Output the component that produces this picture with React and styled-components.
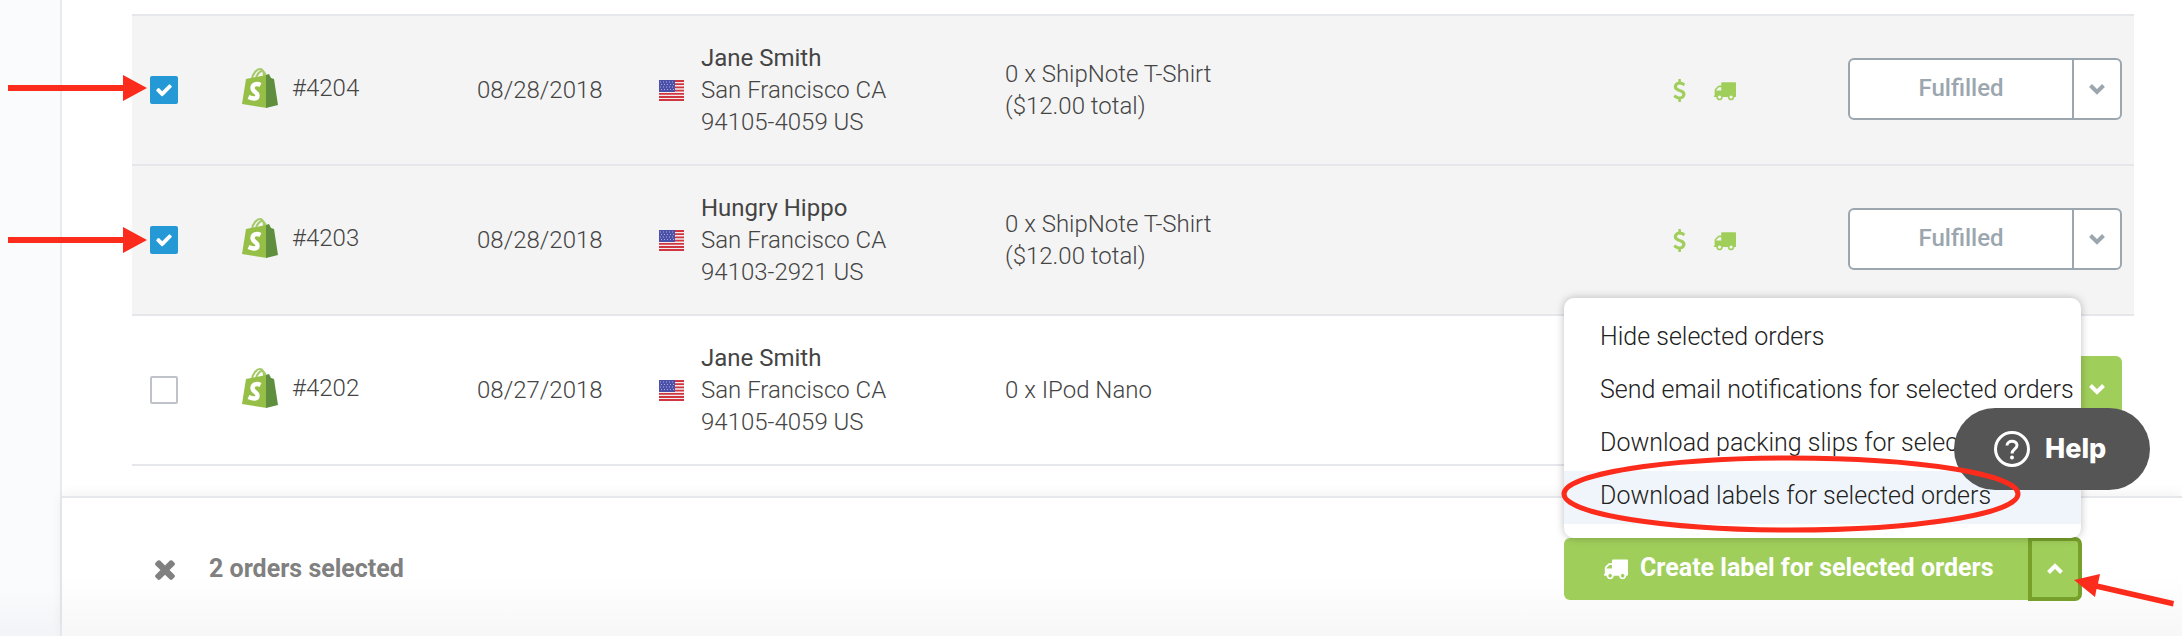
import React from "react";
import styled, { createGlobalStyle } from "styled-components";

const truckPath =
  "M640 1408q0-52-38-90t-90-38-90 38-38 90 38 90 90 38 90-38 38-90zm-384-512h384v-256h-158q-13 0-22 9l-195 195q-9 9-9 22v30zm1280 512q0-52-38-90t-90-38-90 38-38 90 38 90 90 38 90-38 38-90zm256-1088v1024q0 15-4 26.5t-13.5 18.5-16.5 11.5-23.5 6-22.5 2-25.5 0-22.5-.5q0 106-75 181t-181 75-181-75-75-181h-384q0 106-75 181t-181 75-181-75-75-181h-64q-3 0-22.5.5t-25.5 0-22.5-2-23.5-6-16.5-11.5-13.5-18.5-4-26.5q0-26 19-45t45-19v-320q0-8-.5-35t0-38 2.5-34.5 6.5-37 14-30.5 22.5-30l198-198q19-19 50.5-32t58.5-13h160v-192q0-26 19-45t45-19h1024q26 0 45 19t19 45z";
const dollarPath =
  "M1362 1185q0 153-99.5 263.5t-258.5 136.5v175q0 14-9 23t-23 9h-135q-13 0-22.5-9.5t-9.5-22.5v-175q-66-9-127.5-31t-101.5-44.5-74-48-46.5-37.5-17.5-18q-17-21-2-41l103-135q7-10 23-12 15-2 24 9l2 2q113 99 243 125 37 8 74 8 81 0 142.5-43t61.5-122q0-28-15-53t-33.5-42-58.5-37.5-66-32-80-32.5q-39-16-61.5-25t-61.5-26.5-62.5-31-56.5-35.5-53.5-42.5-43.5-49-35.5-58-21-66.5-8.5-78q0-138 98-242t255-134v-180q0-13 9.5-22.5t22.5-9.5h135q14 0 23 9t9 23v176q57 6 110.5 23t87 33.5 63.5 37.5 39 29 15 14q17 18 5 38l-81 146q-8 15-23 16-14 3-27-7-3-3-14.5-12t-39-26.5-58.5-32-74.5-26-85.5-11.5q-95 0-155 43t-60 111q0 26 8.5 48t29.5 41.5 39.5 33 56 31 60.5 27 70 27.5q53 20 81 31.5t76 35 75.5 42.5 62 50 53 63.5 31.5 76.5 13 94z";
const closePath =
  "M1490 1322q0 40-28 68l-136 136q-28 28-68 28t-68-28l-294-294-294 294q-28 28-68 28t-68-28l-136-136q-28-28-28-68t28-68l294-294-294-294q-28-28-28-68t28-68l136-136q28-28 68-28t68 28l294 294 294-294q28-28 68-28t68 28l136 136q28 28 28 68t-28 68l-294 294 294 294q28 28 28 68z";
const checkPath =
  "M1671 566q0 40-28 68l-724 724-136 136q-28 28-68 28t-68-28l-136-136-362-362q-28-28-28-68t28-68l136-136q28-28 68-28t68 28l294 295 656-657q28-28 68-28t68 28l136 136q28 28 28 68z";

const Glyph = ({ d, size }) => (
  <svg
    width={size}
    height={size}
    viewBox="0 0 1792 1792"
    fill="currentColor"
    aria-hidden="true"
  >
    <path d={d} />
  </svg>
);

const Chevron = ({ up }) => (
  <svg width="18" height="12" viewBox="0 0 18 12" aria-hidden="true">
    <path
      d={up ? "M2.5 9.5 9 3l6.5 6.5" : "M2.5 2.5 9 9l6.5-6.5"}
      fill="none"
      stroke="currentColor"
      strokeWidth="4"
    />
  </svg>
);

const ShopifyBag = () => (
  <svg width="36" height="40" viewBox="0 0 36 40" aria-hidden="true">
    <path
      d="M10 11C11 5 15 1 18 1c3 0 4 4 4 8M14 10c1-4 4-7 6-7 2 0 3 2 4 5"
      fill="none"
      stroke="#a3c968"
      strokeWidth="2"
    />
    <path d="M4 11 24 7l1 33L0 36z" fill="#95bf47" />
    <path d="M24 7l3-1 2 4 3 1 4 26-12 3z" fill="#5e8e3e" />
    <path
      d="M18.500 17c-4-2-8-.6-8 3 0 4 5 4 5 7.400 0 4-4.500 3.600-9 1.500"
      fill="none"
      stroke="#fff"
      strokeWidth="4.400"
    />
  </svg>
);

const Flag = () => (
  <svg width="25" height="21" viewBox="0 0 25 21" aria-label="US" role="img">
    <path d="M0 0h25v21H0z" fill="#f3ecec" />
    <path
      d="M0 1h25M0 4.200h25M0 7.400h25M0 10.600h25M0 13.800h25M0 17h25M0 20h25"
      stroke="#cf3640"
      strokeWidth="1.800"
    />
    <path d="M0 0h16v12H0z" fill="#4b50a8" />
    <path
      d="M1 2h14M2 4.500h14M1 7h14M2 9.500h14"
      stroke="#a9abdd"
      strokeWidth="1"
      strokeDasharray="1 2"
    />
  </svg>
);

const orders = [
  {
    id: "4204",
    date: "08/28/2018",
    name: "Jane Smith",
    zip: "94105-4059 US",
    item: "0 x ShipNote T-Shirt",
    total: "($12.00 total)",
    fulfilled: true,
  },
  {
    id: "4203",
    date: "08/28/2018",
    name: "Hungry Hippo",
    zip: "94103-2921 US",
    item: "0 x ShipNote T-Shirt",
    total: "($12.00 total)",
    fulfilled: true,
  },
  {
    id: "4202",
    date: "08/27/2018",
    name: "Jane Smith",
    zip: "94105-4059 US",
    item: "0 x IPod Nano",
    fulfilled: false,
  },
];

const actions = [
  "Hide selected orders",
  "Send email notifications for selected orders",
  "Download packing slips for selected orders",
  "Download labels for selected orders",
];

function OrderRow({ order }) {
  return (
    <Row $selected={order.fulfilled}>
      <td>
        <Check>
          <input
            type="checkbox"
            aria-label={`Select order #${order.id}`}
            defaultChecked={order.fulfilled}
          />
          <Glyph d={checkPath} size={18} />
        </Check>
      </td>
      <td>
        <OrderNumber>
          <ShopifyBag />
          <span>#{order.id}</span>
        </OrderNumber>
      </td>
      <td>{order.date}</td>
      <td>
        <Customer>
          <Flag />
          <address>
            <strong>{order.name}</strong>
            <br />
            San Francisco CA
            <br />
            {order.zip}
          </address>
        </Customer>
      </td>
      <td>
        {order.item}
        {order.total && <br />}
        {order.total}
      </td>
      <td>
        {order.fulfilled && (
          <Status>
            <Glyph d={dollarPath} size={23} />
            <Glyph d={truckPath} size={23} />
          </Status>
        )}
      </td>
      <td>
        <Split $primary={!order.fulfilled}>
          <button type="button">{order.fulfilled && "Fulfilled"}</button>
          <button type="button" aria-label="More actions">
            <Chevron />
          </button>
        </Split>
      </td>
    </Row>
  );
}

export default function App() {
  return (
    <>
      <GlobalStyle />
      <Page>
        <Sidebar />
        <Main>
          <Orders>
            <colgroup>
              <col width="110" />
              <col width="235" />
              <col width="182" />
              <col width="346" />
              <col />
              <col width="180" />
              <col width="286" />
            </colgroup>
            <tbody>
              {orders.map((order) => (
                <OrderRow key={order.id} order={order} />
              ))}
            </tbody>
          </Orders>
          <Footer>
            <Clear type="button" aria-label="Clear selection">
              <Glyph d={closePath} size={30} />
            </Clear>
            <Count>2 orders selected</Count>
            <BulkActions>
              <Menu>
                {actions.map((label, i) => (
                  <MenuItem key={label} type="button" $active={i === 3}>
                    {label}
                  </MenuItem>
                ))}
              </Menu>
              <CreateLabel type="button">
                <Glyph d={truckPath} size={25} />
                Create label for selected orders
              </CreateLabel>
              <Toggle type="button" aria-label="Close menu">
                <Chevron up />
              </Toggle>
            </BulkActions>
          </Footer>
        </Main>
        <Help type="button">
          <svg width="36" height="36" viewBox="0 0 36 36" aria-hidden="true">
            <circle
              cx="18"
              cy="18"
              r="16.500"
              fill="none"
              stroke="#fff"
              strokeWidth="3"
            />
            <path
              d="M13 14.500c0-5.500 10-5.500 10-.3 0 4-5 3.800-5 8.300"
              fill="none"
              stroke="#fff"
              strokeWidth="3"
            />
            <circle cx="18" cy="26.500" r="2" fill="#fff" />
          </svg>
          Help
        </Help>
        <Arrow $x={8} $y={74} width="140" height="28" viewBox="0 0 140 28">
          <path d="M0 11h115V1l24 13-24 13V17H0z" />
        </Arrow>
        <Arrow $x={8} $y={226} width="140" height="28" viewBox="0 0 140 28">
          <path d="M0 11h115V1l24 13-24 13V17H0z" />
        </Arrow>
        <Arrow $x={2072} $y={572} width="104" height="36" viewBox="0 0 104 36">
          <path d="M2 8 28 2l-2 9.500L102 29l-1 5.500L24.500 17 23 25z" />
        </Arrow>
        <Arrow $x={1560} $y={454} width="464" height="80" viewBox="0 0 464 80">
          <ellipse
            cx="231"
            cy="40"
            rx="227"
            ry="36"
            fill="none"
            stroke="#fc2c1c"
            strokeWidth="5"
          />
        </Arrow>
      </Page>
    </>
  );
}

const GlobalStyle = createGlobalStyle`
  * {
    box-sizing: border-box;
  }
  body {
    margin: 0;
    background: #fff;
    color: #444;
    font-family: Roboto, "Liberation Sans", sans-serif;
    font-size: 24px;
    font-weight: 300;
    line-height: 32px;
  }
  button {
    margin: 0;
    border: 0;
    padding: 0;
    background: none;
    color: inherit;
    font: inherit;
    cursor: pointer;
  }
  svg {
    display: block;
    flex: none;
  }
`;

const Page = styled.div`
  position: relative;
  display: flex;
  min-height: 100vh;
  overflow: hidden;
`;

const Sidebar = styled.aside`
  flex: none;
  width: 62px;
  border-right: 2px solid #e9eaee;
  background: linear-gradient(to top, #f3f4f7, #fafbfd 48px);
`;

const Main = styled.main`
  flex: 1;
  display: flex;
  flex-direction: column;
  padding-top: 14px;
`;

const Orders = styled.table`
  margin: 0 48px 30px 70px;
  border-collapse: separate;
  border-spacing: 0;
  border-bottom: 2px solid #e6e7eb;
  table-layout: fixed;

  td {
    height: 150px;
    padding: 0;
    border-top: 2px solid #e6e7eb;
    vertical-align: middle;
  }
  td:first-child {
    padding-left: 18px;
  }
`;

const Row = styled.tr`
  background: ${(p) => (p.$selected ? "#f4f4f4" : "#fff")};
`;

const Check = styled.label`
  display: grid;
  place-items: center;
  width: 28px;
  height: 28px;

  input,
  svg {
    grid-area: 1 / 1;
  }
  input {
    appearance: none;
    width: 28px;
    height: 28px;
    margin: 0;
    border: 2px solid #bfc3c9;
    border-radius: 2px;
    background: #fff;
  }
  input:checked {
    border-color: #2599d6;
    background: #2599d6;
  }
  svg {
    z-index: 1;
    color: #fff;
    pointer-events: none;
  }
`;

const OrderNumber = styled.div`
  display: flex;
  align-items: center;
  gap: 14px;
  padding-bottom: 4px;
`;

const Customer = styled.div`
  display: flex;
  align-items: center;
  gap: 17px;

  address {
    font-style: normal;
  }
  strong {
    font-weight: 400;
  }
`;

const Status = styled.div`
  display: flex;
  gap: 22px;
  color: #a0ce5b;
`;

const Split = styled.div`
  display: flex;
  width: 274px;
  height: ${(p) => (p.$primary ? 66 : 62)}px;
  margin-bottom: 2px;
  overflow: hidden;
  border: 2px solid ${(p) => (p.$primary ? "#a0ce5b" : "#9ba6ae")};
  border-radius: 6px;
  background: ${(p) => (p.$primary ? "#a0ce5b" : "#fff")};
  color: ${(p) => (p.$primary ? "#fff" : "#9ba6ae")};
  font-weight: 500;

  button:first-child {
    flex: 1;
    padding-bottom: 2px;
  }
  button:last-child {
    display: grid;
    place-items: center;
    width: 48px;
    border-left: 2px solid currentColor;
  }
`;

const Footer = styled.footer`
  flex: 1;
  display: flex;
  align-items: flex-start;
  padding: 40px 101px 36px 88px;
  border-top: 2px solid #e6e7eb;
  background: linear-gradient(to top, #f7f7f7, #fff 60px);
  box-shadow: 0 -2px 12px rgba(0, 0, 0, 0.06);
`;

const Clear = styled.button`
  display: grid;
  place-items: center;
  width: 29px;
  height: 62px;
  color: #808080;
`;

const Count = styled.span`
  margin-left: 30px;
  font-size: 25px;
  font-weight: 700;
  line-height: 62px;
  color: #808080;
`;

const BulkActions = styled.div`
  position: relative;
  display: flex;
  width: 517px;
  height: 62px;
  margin-left: auto;
  color: #fff;
`;

const CreateLabel = styled.button`
  flex: 1;
  display: flex;
  align-items: center;
  gap: 12px;
  padding: 0 0 2px 39px;
  border-radius: 6px 0 0 6px;
  background: #a0ce5b;
  font-size: 25px;
  font-weight: 700;
  white-space: nowrap;
`;

const Toggle = styled.button`
  display: grid;
  place-items: center;
  width: 52px;
  border: 3px solid #76a02a;
  border-radius: 0 6px 6px 0;
  background: #a0ce5b;
  box-shadow: 0 0 0 1px #76a02a;
`;

const Menu = styled.div`
  position: absolute;
  bottom: 100%;
  left: 0;
  width: 100%;
  padding: 14px 0;
  border-radius: 10px;
  background: #fff;
  box-shadow: 0 0 8px rgba(0, 0, 0, 0.25);
`;

const MenuItem = styled.button`
  display: block;
  width: 100%;
  height: 53px;
  padding: 0 0 4px 36px;
  background: ${(p) => (p.$active ? "#eff5fa" : "none")};
  color: #222;
  font-size: 25px;
  text-align: left;
  white-space: nowrap;
`;

const Help = styled.button`
  position: absolute;
  right: 32px;
  bottom: 146px;
  display: flex;
  align-items: center;
  gap: 15px;
  width: 196px;
  height: 82px;
  padding-left: 40px;
  border-radius: 41px;
  background: #555;
  color: #fff;
  font-family: Inter, sans-serif;
  font-size: 27px;
  font-weight: 800;
`;

const Arrow = styled.svg`
  position: absolute;
  top: ${(p) => p.$y}px;
  left: ${(p) => p.$x}px;
  fill: #fc2c1c;
  pointer-events: none;
`;
